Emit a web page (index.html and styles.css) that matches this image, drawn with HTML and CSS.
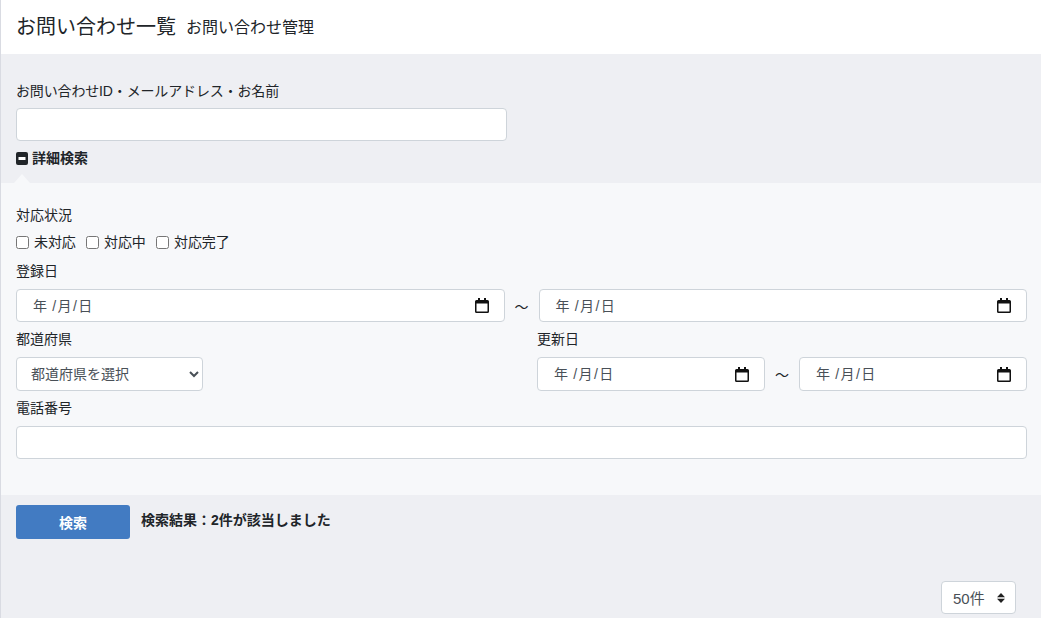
FILE: index.html
```html
<!DOCTYPE html>
<html lang="ja">
<head>
    <meta charset="UTF-8">
    <meta name="viewport" content="width=device-width, initial-scale=1.0">
    <title>お問い合わせ一覧</title>
    <link rel="stylesheet" href="styles.css">
</head>
<body>
    <header class="page-head">
        <h1 class="page-title">お問い合わせ一覧</h1>
        <span class="page-sub">お問い合わせ管理</span>
    </header>

    <form class="search">
        <div class="search-main">
            <label class="field-label label-keyword">お問い合わせID・メールアドレス・お名前</label>
            <input type="text" class="input input-keyword">
            <div class="toggle">
                <svg class="toggle-icon" width="12" height="13" viewBox="0 0 12 13"><rect width="12" height="13" rx="2" fill="#212529"/><rect x="2.500" y="5" width="7" height="3" fill="#fff"/></svg>
                <span>詳細検索</span>
            </div>
        </div>

        <div class="detail">
            <p class="field-label">対応状況</p>
            <div class="checks">
                <label class="check"><input type="checkbox"><span>未対応</span></label>
                <label class="check"><input type="checkbox"><span>対応中</span></label>
                <label class="check"><input type="checkbox"><span>対応完了</span></label>
            </div>

            <p class="field-label label-date">登録日</p>
            <div class="date-range">
                <div class="input date"><span class="date-text">年 /月/日</span><svg class="cal" width="14" height="15" viewBox="0 0 14 15"><path d="M3 0h2v2h4V0h2v2h1.500A1.500 1.500 0 0 1 14 3.500v10a1.500 1.500 0 0 1-1.500 1.500h-11A1.500 1.500 0 0 1 0 13.500v-10A1.500 1.500 0 0 1 1.500 2H3zM1.500 5.500v8h11v-8z" fill="#111"/></svg></div>
                <span class="tilde">～</span>
                <div class="input date"><span class="date-text">年 /月/日</span><svg class="cal" width="14" height="15" viewBox="0 0 14 15"><path d="M3 0h2v2h4V0h2v2h1.500A1.500 1.500 0 0 1 14 3.500v10a1.500 1.500 0 0 1-1.500 1.500h-11A1.500 1.500 0 0 1 0 13.500v-10A1.500 1.500 0 0 1 1.500 2H3zM1.500 5.500v8h11v-8z" fill="#111"/></svg></div>
            </div>

            <div class="two-col">
                <div>
                    <p class="field-label">都道府県</p>
                    <select class="input pref">
                        <option>都道府県を選択</option>
                    </select>
                </div>
                <div>
                    <p class="field-label">更新日</p>
                    <div class="date-range">
                        <div class="input date"><span class="date-text">年 /月/日</span><svg class="cal" width="14" height="15" viewBox="0 0 14 15"><path d="M3 0h2v2h4V0h2v2h1.500A1.500 1.500 0 0 1 14 3.500v10a1.500 1.500 0 0 1-1.500 1.500h-11A1.500 1.500 0 0 1 0 13.500v-10A1.500 1.500 0 0 1 1.500 2H3zM1.500 5.500v8h11v-8z" fill="#111"/></svg></div>
                        <span class="tilde">～</span>
                        <div class="input date"><span class="date-text">年 /月/日</span><svg class="cal" width="14" height="15" viewBox="0 0 14 15"><path d="M3 0h2v2h4V0h2v2h1.500A1.500 1.500 0 0 1 14 3.500v10a1.500 1.500 0 0 1-1.500 1.500h-11A1.500 1.500 0 0 1 0 13.500v-10A1.500 1.500 0 0 1 1.500 2H3zM1.500 5.500v8h11v-8z" fill="#111"/></svg></div>
                    </div>
                </div>
            </div>

            <p class="field-label label-tel">電話番号</p>
            <input type="text" class="input input-tel">
        </div>

        <div class="actions">
            <button type="button" class="btn">検索</button>
            <p class="result">検索結果：2件が該当しました</p>
        </div>

        <div class="per-page">
            <div class="input per-select">
                <span class="per-text">50件</span>
                <svg width="8" height="12" viewBox="0 0 8 12"><path d="M4 1l4 4.200H0zM4 11L0 6.800h8z" fill="#222"/></svg>
            </div>
        </div>
    </form>
</body>
</html>
```

FILE: styles.css
```css
html, body {
    height: 100%;
}
body {
    margin: 0;
    overflow: hidden;
    background-color: #eeeff3;
    border-left: 1px solid #d9dbe2;
    color: #212529;
    font-family: "Liberation Sans", "Noto Sans CJK JP", sans-serif;
    font-size: 14px;
}
.page-head {
    display: flex;
    align-items: center;
    box-sizing: border-box;
    height: 54px;
    padding: 0 0 3px 15px;
    background-color: #fff;
}
.page-title {
    margin: 0;
    font-size: 20px;
    font-weight: 400;
}
.page-sub {
    margin-left: 10px;
    font-size: 16px;
}
.search-main {
    box-sizing: border-box;
    height: 129px;
    padding: 27px 15px 0;
}
.field-label {
    display: block;
    margin: 0;
    height: 20px;
    line-height: 20px;
}
.label-keyword {
    letter-spacing: -0.15px;
}
.input {
    display: block;
    box-sizing: border-box;
    height: 33px;
    background-color: #fff;
    border: 1px solid #ced4da;
    border-radius: 4px;
    font-family: inherit;
    font-size: 14px;
    color: #495057;
}
.input-keyword {
    width: 491px;
    margin-top: 7px;
}
.toggle {
    display: flex;
    align-items: center;
    gap: 4px;
    margin-top: 7px;
    font-weight: 700;
    line-height: 20px;
}
.detail {
    position: relative;
    padding: 22px 14px 36px 15px;
    background-color: #f7f8fa;
}
.detail::before {
    content: "";
    position: absolute;
    left: 13px;
    top: -9px;
    border-left: 8px solid transparent;
    border-right: 8px solid transparent;
    border-bottom: 9px solid #f7f8fa;
}
.checks {
    display: flex;
    gap: 10.300px;
    margin-top: 7px;
}
.check {
    display: flex;
    align-items: center;
    height: 20px;
}
.check input {
    width: 13px;
    height: 13px;
    margin: 0 5px 0 0;
}
.check span {
    margin-top: -2px;
    letter-spacing: -0.1px;
}
.label-date {
    margin-top: 9px;
}
.date-range {
    display: flex;
    align-items: center;
    margin-top: 8px;
}
.date {
    display: flex;
    flex: 1;
    align-items: center;
    justify-content: space-between;
    padding: 0 15px 0 16px;
}
.date-text {
    margin-top: -2px;
    letter-spacing: 1.400px;
    word-spacing: -1.500px;
}
.tilde {
    width: 34px;
    text-align: center;
}
.two-col {
    display: grid;
    grid-template-columns: 521px 1fr;
    margin-top: 7px;
}
.two-col .date {
    height: 34px;
}
.pref {
    width: 187px;
    height: 34px;
    margin-top: 8px;
    padding-left: 10px;
}
.label-tel {
    margin-top: 7px;
}
.input-tel {
    width: 100%;
    margin-top: 8px;
}
.actions {
    display: flex;
    align-items: flex-start;
    padding: 10px 15px 0;
}
.btn {
    width: 114px;
    height: 34px;
    padding-bottom: 2px;
    background-color: #427bc2;
    border: none;
    border-radius: 3px;
    color: #fff;
    font-family: inherit;
    font-size: 14px;
    font-weight: 700;
}
.result {
    margin: 5px 0 0 11px;
    font-weight: 700;
    line-height: 20px;
}
.per-page {
    display: flex;
    justify-content: flex-end;
    padding: 42px 25px 0 0;
}
.per-select {
    display: flex;
    align-items: center;
    justify-content: space-between;
    width: 75px;
    padding: 0 10px 0 11px;
}
.per-text {
    font-size: 15px;
    margin-top: -1px;
}
```
